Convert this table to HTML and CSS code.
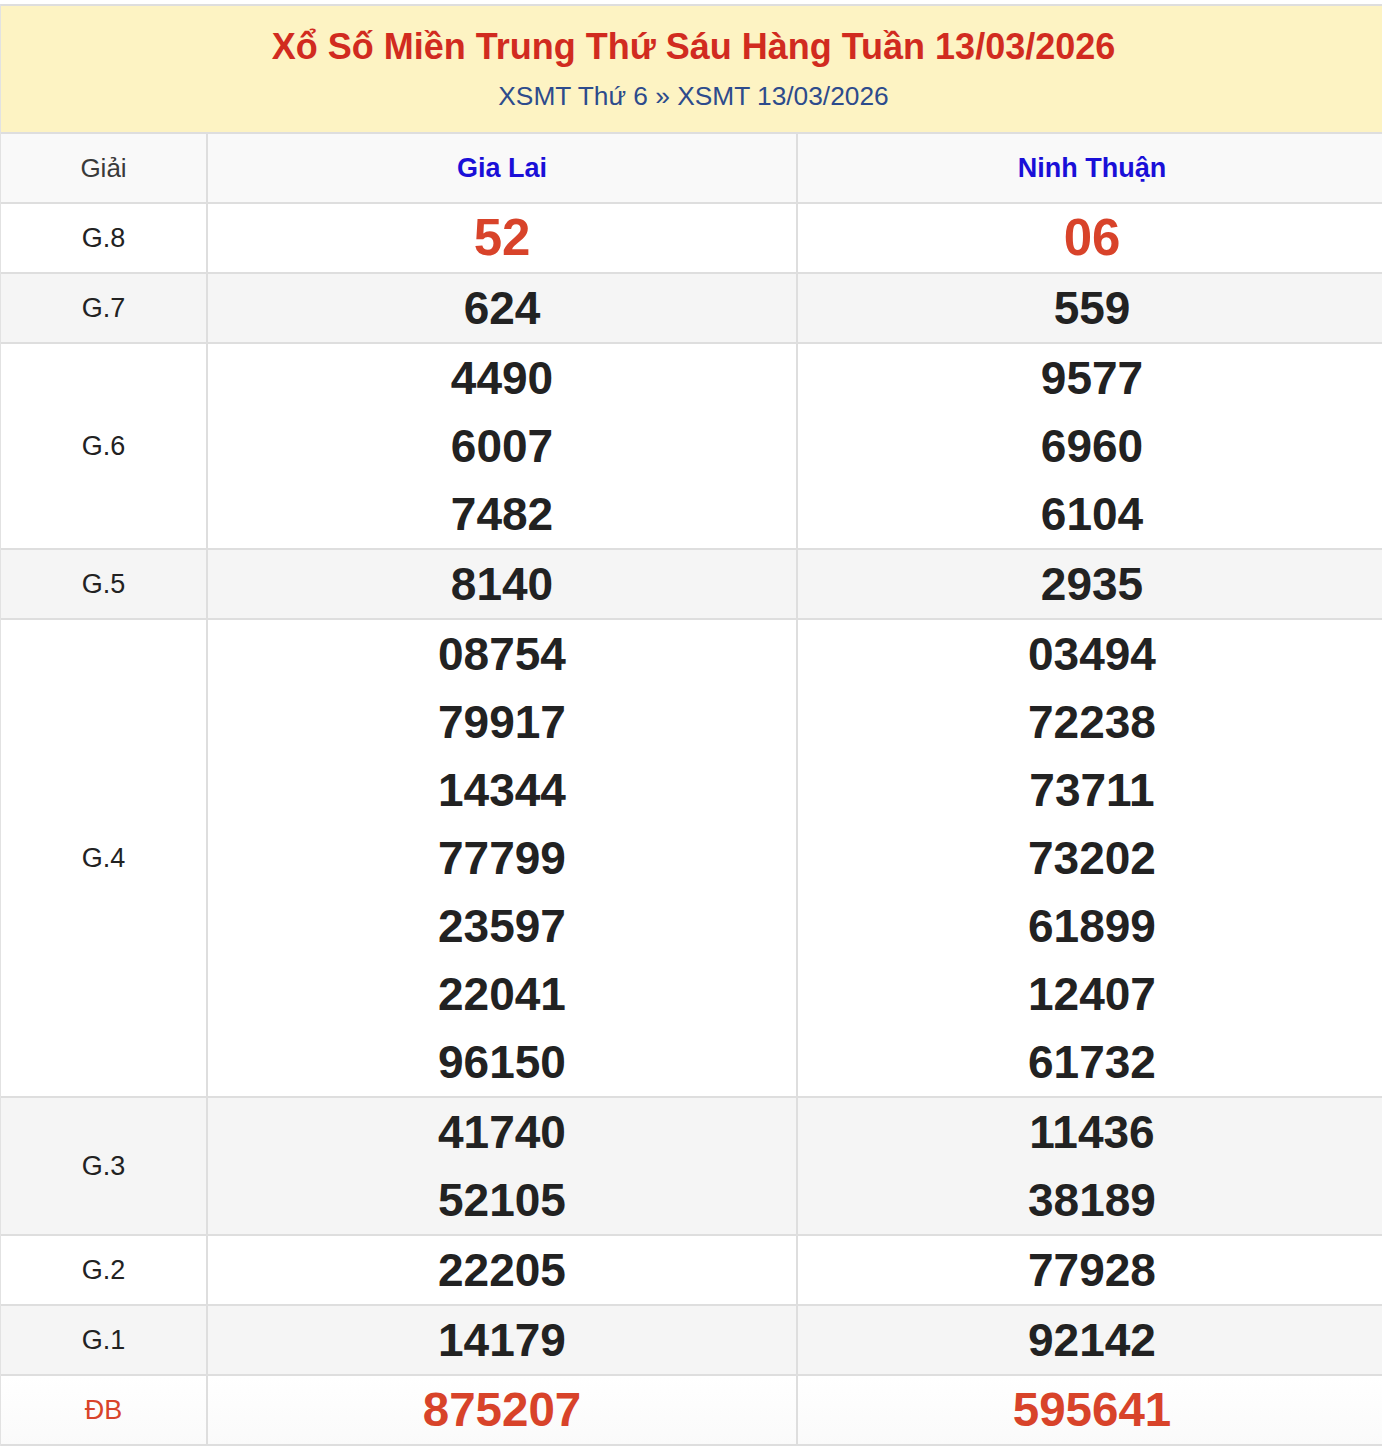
FILE: index.html
```html
<!DOCTYPE html>
<html lang="vi">
<head>
<meta charset="utf-8">
<title>XSMT 13/03/2026</title>
<link rel="stylesheet" href="styles.css">
</head>
<body>
<div class="box">
  <div class="head">
    <h1 class="title">Xổ Số Miền Trung Thứ Sáu Hàng Tuần 13/03/2026</h1>
    <div class="crumb"><a href="#">XSMT Thứ 6</a> » <a href="#">XSMT 13/03/2026</a></div>
  </div>
  <table class="kq">
    <colgroup><col class="c1"><col class="c2"><col class="c3"></colgroup>
    <thead>
      <tr><th class="lbl-h">Giải</th><th class="prov">Gia Lai</th><th class="prov">Ninh Thuận</th></tr>
    </thead>
    <tbody>
      <tr><td class="lbl">G.8</td><td class="num g8"><div>52</div></td><td class="num g8"><div>06</div></td></tr>
      <tr class="alt"><td class="lbl">G.7</td><td class="num"><div>624</div></td><td class="num"><div>559</div></td></tr>
      <tr><td class="lbl">G.6</td><td class="num"><div>4490</div><div>6007</div><div>7482</div></td><td class="num"><div>9577</div><div>6960</div><div>6104</div></td></tr>
      <tr class="alt"><td class="lbl">G.5</td><td class="num"><div>8140</div></td><td class="num"><div>2935</div></td></tr>
      <tr><td class="lbl">G.4</td><td class="num"><div>08754</div><div>79917</div><div>14344</div><div>77799</div><div>23597</div><div>22041</div><div>96150</div></td><td class="num"><div>03494</div><div>72238</div><div>73711</div><div>73202</div><div>61899</div><div>12407</div><div>61732</div></td></tr>
      <tr class="alt"><td class="lbl">G.3</td><td class="num"><div>41740</div><div>52105</div></td><td class="num"><div>11436</div><div>38189</div></td></tr>
      <tr><td class="lbl">G.2</td><td class="num"><div>22205</div></td><td class="num"><div>77928</div></td></tr>
      <tr class="alt"><td class="lbl">G.1</td><td class="num"><div>14179</div></td><td class="num"><div>92142</div></td></tr>
      <tr class="db"><td class="lbl red">ĐB</td><td class="num red"><div>875207</div></td><td class="num red"><div>595641</div></td></tr>
    </tbody>
  </table>
</div>
</body>
</html>
```
FILE: styles.css
```css
html, body {
  margin: 0;
  padding: 0;
  background: #ffffff;
}
body {
  padding-top: 4px;
  overflow-x: hidden;
  font-family: "Liberation Sans", Arial, Helvetica, sans-serif;
  color: #222;
}
.box {
  width: calc(100% + 4px);
  border-top: 2px solid #dedede;
  border-left: 1px solid #e2e2e2;
  box-sizing: border-box;
}
.head {
  background: #fdf3c3;
  text-align: center;
  padding: 19px 0 23px;
  border-bottom: 2px solid #dedede;
}
.title {
  margin: 0;
  font-size: 36px;
  line-height: 44px;
  font-weight: bold;
  color: #d12b1f;
}
.crumb {
  margin-top: 14px;
  font-size: 26.3px;
  line-height: 26px;
  color: #2d4b8c;
}
.crumb a {
  color: #2d4b8c;
  text-decoration: none;
}
.kq {
  width: 100%;
  table-layout: fixed;
  border-collapse: separate;
  border-spacing: 0;
}
.c1 { width: 207px; }
.c2 { width: 590px; }
.kq th, .kq td {
  padding: 0;
  border-right: 2px solid #dedede;
  border-bottom: 2px solid #dedede;
  text-align: center;
  vertical-align: middle;
}
.kq th:last-child, .kq td:last-child {
  border-right: none;
}
.kq thead th {
  background: #f9f9f9;
  height: 68px;
}
.lbl-h {
  font-weight: normal;
  font-size: 26px;
  color: #3a3a3a;
}
.prov {
  font-weight: bold;
  font-size: 27px;
  color: #1a0fd8;
}
.kq tbody tr { background: #ffffff; }
.kq tbody tr.alt { background: #f5f5f5; }
.kq tbody tr.db { background: linear-gradient(#ffffff, #fafafa); }
.lbl {
  font-size: 27px;
  color: #222;
}
.num div {
  font-weight: bold;
  font-size: 46px;
  line-height: 68px;
  height: 68px;
  color: #222;
}
.num.g8 div {
  font-size: 51px;
  color: #d8432a;
}
.red, .num.red div {
  color: #d8432a;
}
.num.red div {
  font-size: 47.5px;
}
```
